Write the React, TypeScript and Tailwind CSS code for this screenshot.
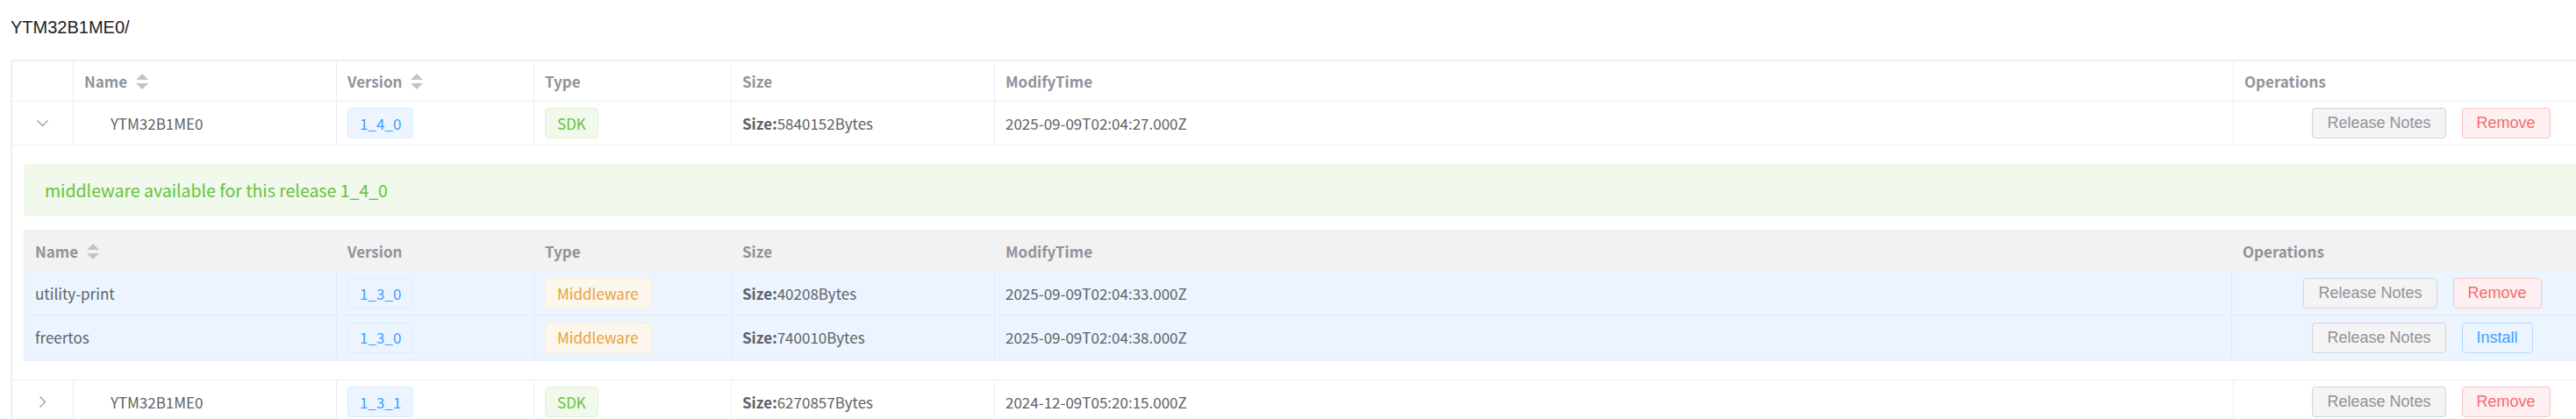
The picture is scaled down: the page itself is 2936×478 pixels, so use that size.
import React from 'react';

type Row = {
  name: string;
  version: string;
  size: string;
  time: string;
  action: 'Remove' | 'Install';
};

const releases: (Row & { open: boolean })[] = [
  { name: 'YTM32B1ME0', version: '1_4_0', size: '5840152', time: '2025-09-09T02:04:27.000Z', action: 'Remove', open: true },
  { name: 'YTM32B1ME0', version: '1_3_1', size: '6270857', time: '2024-12-09T05:20:15.000Z', action: 'Remove', open: false },
];

const middleware: Row[] = [
  { name: 'utility-print', version: '1_3_0', size: '40208', time: '2025-09-09T02:04:33.000Z', action: 'Remove' },
  { name: 'freertos', version: '1_3_0', size: '740010', time: '2025-09-09T02:04:38.000Z', action: 'Install' },
];

const SortCaret = () => (
  <svg width="14" height="18" viewBox="0 0 14 18" className="ml-[10px] shrink-0">
    <polygon points="0,7 7,0 14,7" fill="#c0c4cc" />
    <polygon points="0,11 14,11 7,18" fill="#c0c4cc" />
  </svg>
);

const Chevron = ({ open }: { open: boolean }) =>
  open ? (
    <svg width="13" height="8" viewBox="0 0 13 8">
      <polyline points="0.5,0.5 6.5,6.5 12.5,0.5" fill="none" stroke="#909399" strokeWidth="1.1" />
    </svg>
  ) : (
    <svg width="8" height="13" viewBox="0 0 8 13">
      <polyline points="0.5,0.5 6.5,6.5 0.5,12.5" fill="none" stroke="#909399" strokeWidth="1.1" />
    </svg>
  );

const Tag = ({ kind, children }: { kind: 'version' | 'sdk' | 'mw'; children: React.ReactNode }) => {
  const colors =
    kind === 'version'
      ? 'bg-[#ecf5ff] border-[#d9ecff] text-[#409eff]'
      : kind === 'sdk'
        ? 'bg-[#f0f9eb] border-[#e1f3d8] text-[#67c23a]'
        : 'bg-[#fdf6ec] border-[#faecd8] text-[#e6a23c]';
  return (
    <span className={`inline-flex h-[35px] items-center rounded-[4px] border px-[13px] text-[17px] ${colors}`}>
      {children}
    </span>
  );
};

const Buttons = ({ action }: { action: 'Remove' | 'Install' }) => (
  <div className="flex items-center justify-center gap-[18px] font-['Liberation_Sans',Arial,sans-serif] text-[18px]">
    <button className="h-[35px] rounded-[4px] border border-[#d3d4d6] bg-[#f4f4f5] px-[16px] text-[#909399]">
      Release Notes
    </button>
    {action === 'Remove' ? (
      <button className="h-[35px] rounded-[4px] border border-[#fbc4c4] bg-[#fef0f0] px-[16px] text-[#f56c6c]">
        Remove
      </button>
    ) : (
      <button className="h-[35px] rounded-[4px] border border-[#b3d8ff] bg-[#ecf5ff] px-[16px] text-[#409eff]">
        Install
      </button>
    )}
  </div>
);

const SizeText = ({ size }: { size: string }) => (
  <span>
    <b className="font-bold">Size:</b>
    {size}Bytes
  </span>
);

const Header = ({ sub }: { sub?: boolean }) => (
  <div className={`flex h-[46px] border-b border-[#ebeef5] font-bold text-[#909399] ${sub ? 'bg-[#f2f2f2]' : 'bg-white'}`}>
    {!sub && <div className="w-[70px] shrink-0 border-r border-[#ebeef5]" />}
    <div className={`flex ${sub ? 'w-[356px]' : 'w-[300px]'} shrink-0 items-center border-r border-[#ebeef5] px-[12px]`}>
      Name <SortCaret />
    </div>
    <div className="flex w-[225px] shrink-0 items-center border-r border-[#ebeef5] px-[12px]">
      Version {!sub && <SortCaret />}
    </div>
    <div className="flex w-[225px] shrink-0 items-center border-r border-[#ebeef5] px-[12px]">Type</div>
    <div className="flex w-[300px] shrink-0 items-center border-r border-[#ebeef5] px-[12px]">Size</div>
    <div className={`flex ${sub ? 'w-[1410px]' : 'w-[1412px]'} shrink-0 items-center border-r border-[#ebeef5] px-[12px]`}>
      ModifyTime
    </div>
    <div className={`flex ${sub ? 'w-[434px]' : 'w-[450px]'} shrink-0 items-center px-[12px]`}>Operations</div>
  </div>
);

const MiddlewareTable = () => (
  <div className="w-[2951px] border-y-2 border-l border-[#ebeef5]">
    <Header sub />
    {middleware.map((m, i) => (
      <div
        key={m.name}
        className={`flex h-[50px] bg-[#ecf5ff] ${i < middleware.length - 1 ? 'border-b border-[#e3eaf4]' : ''}`}
      >
        <div className="flex w-[356px] shrink-0 items-center border-r border-[#e3eaf4] px-[12px]">{m.name}</div>
        <div className="flex w-[225px] shrink-0 items-center border-r border-[#e3eaf4] px-[12px]">
          <Tag kind="version">{m.version}</Tag>
        </div>
        <div className="flex w-[225px] shrink-0 items-center border-r border-[#e3eaf4] px-[12px]">
          <Tag kind="mw">Middleware</Tag>
        </div>
        <div className="flex w-[300px] shrink-0 items-center border-r border-[#e3eaf4] px-[12px]">
          <SizeText size={m.size} />
        </div>
        <div className="flex w-[1410px] shrink-0 items-center border-r border-[#e3eaf4] px-[12px]">{m.time}</div>
        <div className="flex w-[434px] shrink-0 items-center justify-center">
          <Buttons action={m.action} />
        </div>
      </div>
    ))}
  </div>
);

const ReleaseRow = ({ r }: { r: Row & { open: boolean } }) => (
  <>
    <div className="flex h-[50px] border-b border-[#ebeef5]">
      <div className="flex w-[70px] shrink-0 items-center justify-center border-r border-[#ebeef5]">
        <Chevron open={r.open} />
      </div>
      <div className="flex w-[300px] shrink-0 items-center border-r border-[#ebeef5] pl-[42px]">{r.name}</div>
      <div className="flex w-[225px] shrink-0 items-center border-r border-[#ebeef5] px-[12px]">
        <Tag kind="version">{r.version}</Tag>
      </div>
      <div className="flex w-[225px] shrink-0 items-center border-r border-[#ebeef5] px-[12px]">
        <Tag kind="sdk">SDK</Tag>
      </div>
      <div className="flex w-[300px] shrink-0 items-center border-r border-[#ebeef5] px-[12px]">
        <SizeText size={r.size} />
      </div>
      <div className="flex w-[1412px] shrink-0 items-center border-r border-[#ebeef5] px-[12px]">{r.time}</div>
      <div className="flex w-[450px] shrink-0 items-center justify-center">
        <Buttons action={r.action} />
      </div>
    </div>
    {r.open && (
      <div className="border-b border-[#ebeef5] pb-[21px] pl-[13px] pt-[21px]">
        <div className="flex h-[60px] w-[2951px] items-center rounded-[4px] bg-[#f0f9eb] pl-[24px] text-[19.5px] text-[#67c23a]">
          middleware available for this release {r.version}
        </div>
        <div className="mt-[15px]">
          <MiddlewareTable />
        </div>
      </div>
    )}
  </>
);

export default function App() {
  return (
    <div className="h-[478px] w-[2936px] overflow-hidden bg-white">
      <div className="pl-[12px] pt-[19px]">
        <div className="h-[24px] font-['Liberation_Sans',Arial,sans-serif] text-[20px] leading-[24px] text-[#222]">
          YTM32B1ME0/
        </div>
        <div className="mt-[25px] w-[2984px] border-l-2 border-t-2 border-[#ebeef5] font-['Noto_Sans_CJK_SC','Noto_Sans',sans-serif] text-[17px] text-[#606266]">
          <Header />
          {releases.map((r) => (
            <ReleaseRow key={r.version} r={r} />
          ))}
        </div>
      </div>
    </div>
  );
}
